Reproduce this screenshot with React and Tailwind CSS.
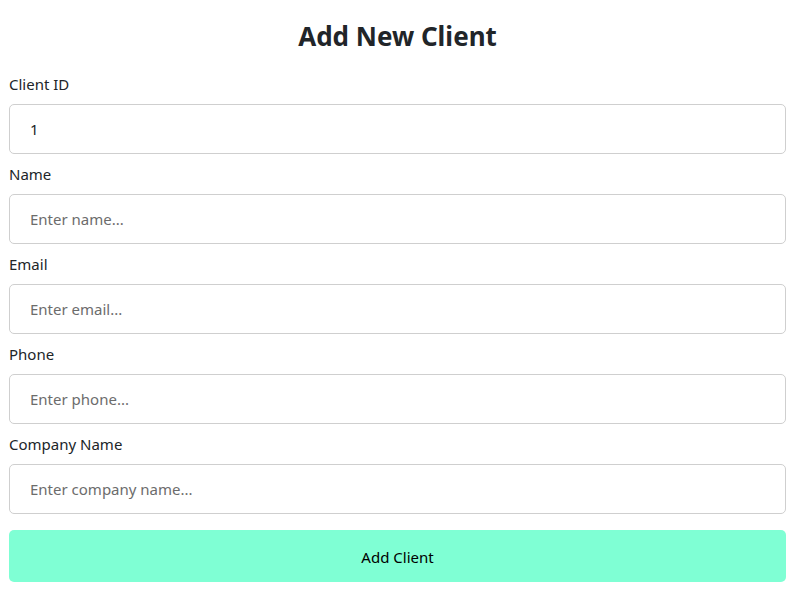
const fields = [
  { label: 'Client ID', value: '1', placeholder: '' },
  { label: 'Name', placeholder: 'Enter name...' },
  { label: 'Email', placeholder: 'Enter email...' },
  { label: 'Phone', placeholder: 'Enter phone...' },
  { label: 'Company Name', placeholder: 'Enter company name...' },
];

export default function App() {
  return (
    <div className="min-h-screen bg-white pl-[9px] pr-[7px] font-['Noto_Sans',sans-serif] text-[#212529]">
      <h1 className="pt-4 mb-4 h-[56px] text-center text-[26px] leading-[40px] font-bold">
        Add New Client
      </h1>
      <form onSubmit={(e) => e.preventDefault()}>
        {fields.map((f) => (
          <div key={f.label}>
            <label className="block h-6 mb-2 text-[15px] leading-6">{f.label}</label>
            <input
              defaultValue={f.value}
              placeholder={f.placeholder}
              className="block w-full h-[50px] mb-2 px-5 border border-[#cfcfcf] rounded-[5px] text-[15px] outline-none placeholder:text-[#6c6c6c]"
            />
          </div>
        ))}
        <button
          type="submit"
          className="mt-2 w-full h-[52px] pt-[2px] rounded-[5px] bg-[#7fffd4] text-[15px] text-black"
        >
          Add Client
        </button>
      </form>
    </div>
  );
}
